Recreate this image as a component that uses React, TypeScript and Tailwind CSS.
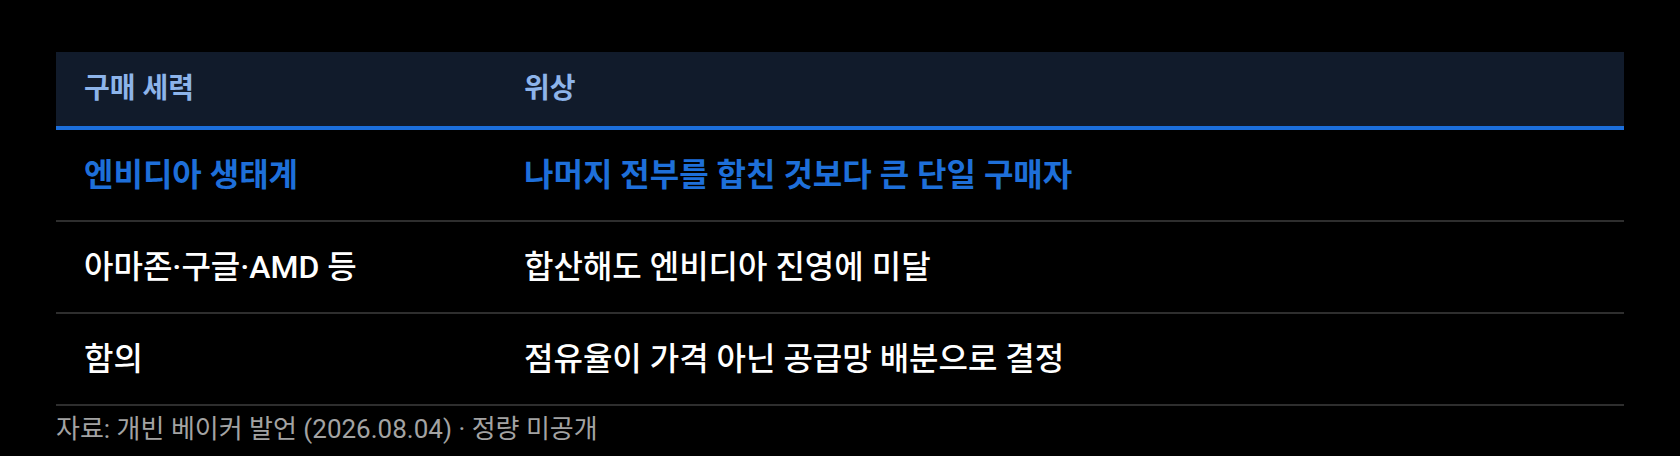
import React from 'react';

interface Row {
  group: string;
  position: string;
  highlight?: boolean;
}

const rows: Row[] = [
  { group: '엔비디아 생태계', position: '나머지 전부를 합친 것보다 큰 단일 구매자', highlight: true },
  { group: '아마존·구글·AMD 등', position: '합산해도 엔비디아 진영에 미달' },
  { group: '함의', position: '점유율이 가격 아닌 공급망 배분으로 결정' },
];

const App: React.FC = () => {
  return (
    <div
      className="min-h-screen w-full bg-black px-14 pt-[52px]"
      style={{ fontFamily: 'Roboto, "Noto Sans CJK KR", sans-serif' }}
    >
      <table className="w-full border-collapse">
        <thead>
          <tr className="bg-[#111b2b] border-b-4 border-[#1c6fdc]">
            <th className="w-[440px] px-7 py-[23px] text-left text-[28px] leading-[28px] font-bold text-[#8db4ea]">
              구매 세력
            </th>
            <th className="px-7 py-[23px] text-left text-[28px] leading-[28px] font-bold text-[#8db4ea]">
              위상
            </th>
          </tr>
        </thead>
        <tbody>
          {rows.map((row) => (
            <tr key={row.group} className="border-b-2 border-[#2e2e2e]">
              <td
                className={`px-7 py-[29px] text-[32px] leading-[32px] ${
                  row.highlight ? 'font-bold text-[#1e6fd9]' : 'font-medium text-white'
                }`}
              >
                {row.group}
              </td>
              <td
                className={`px-7 py-[29px] text-[32px] leading-[32px] ${
                  row.highlight ? 'font-bold text-[#1e6fd9]' : 'font-medium text-white'
                }`}
              >
                {row.position}
              </td>
            </tr>
          ))}
        </tbody>
      </table>
      <p className="pt-2 text-[26px] leading-[30px] text-[#a3a3a3]">
        자료: 개빈 베이커 발언 (2026.08.04) · 정량 미공개
      </p>
    </div>
  );
};

export default App;
